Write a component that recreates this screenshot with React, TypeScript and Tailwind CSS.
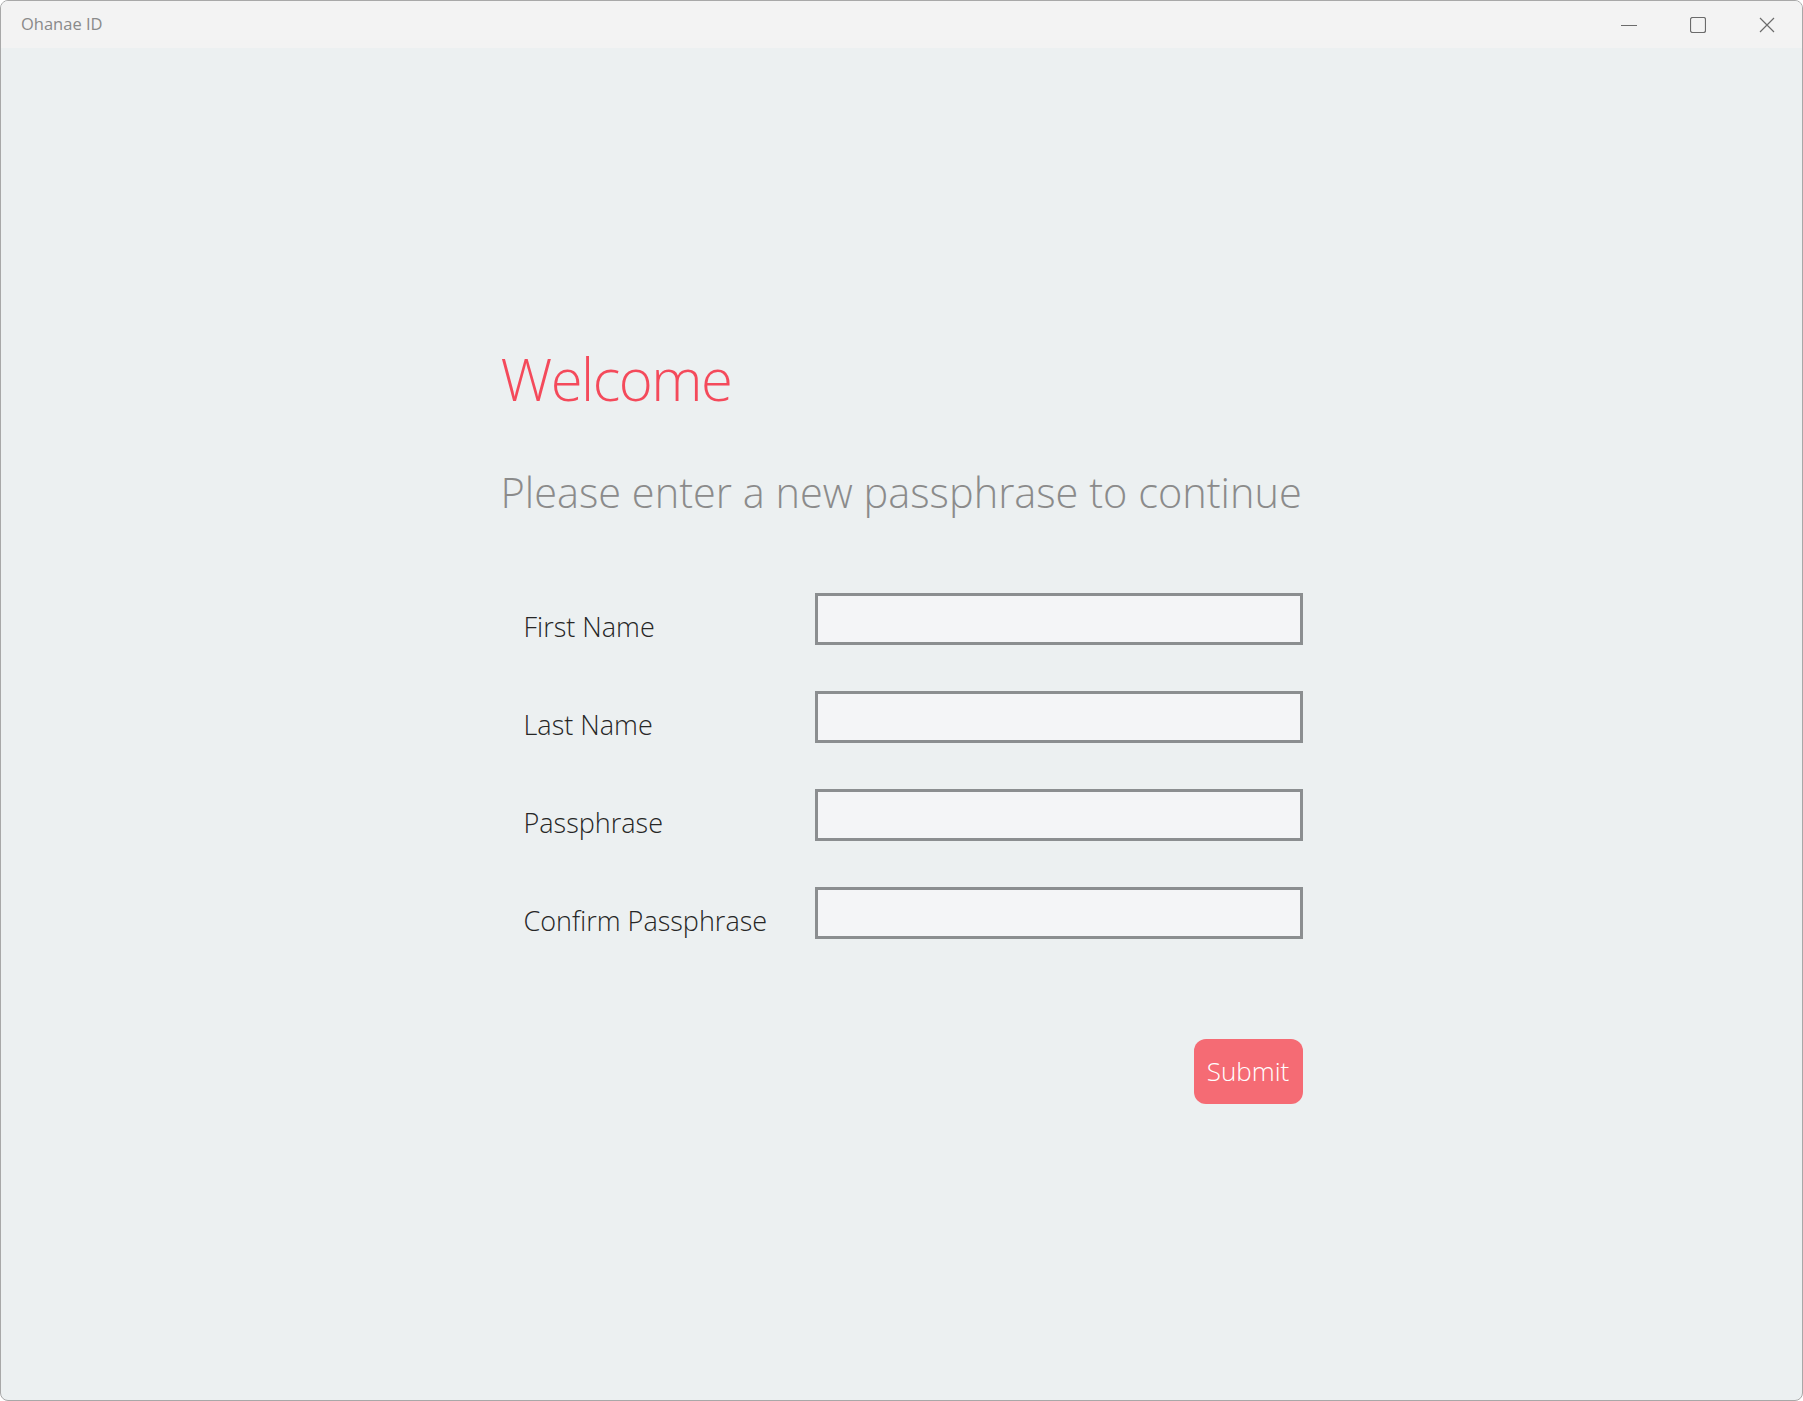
import * as React from "react";

const font = { fontFamily: '"Open Sans", "Noto Sans", sans-serif' };

const Field = ({ label }: { label: string }) => {
  return (
    <div className="flex items-start h-[52px]">
      <div className="w-[314px] pl-[23px] pt-[20px] text-[27px] leading-none font-light text-[#262626] whitespace-nowrap">
        {label}
      </div>
      <div className="w-[488px] h-[52px] border-[3px] border-[#8b8e90] bg-[#f4f5f7]"></div>
    </div>
  );
};

export default function App() {
  return (
    <div className="w-[1803px] h-[1401px] bg-white" style={font}>
      <div className="w-full h-full flex flex-col rounded-lg border border-[#a8a8a8] overflow-hidden bg-[#ecf0f1]">
        {/* title bar */}
        <div className="h-[47px] flex items-center justify-between bg-[#f3f3f3]">
          <div className="pl-[20px] text-[16.5px] text-[#8a8a8a]">Ohanae ID</div>
          <div className="flex items-center h-full mr-[1px]">
            <div className="w-[69px] h-full flex items-center justify-center">
              <svg width="16" height="16" viewBox="0 0 16 16">
                <path d="M0 8.5h16" stroke="#6b6b6b" strokeWidth="1.2" />
              </svg>
            </div>
            <div className="w-[69px] h-full flex items-center justify-center">
              <svg width="16" height="16" viewBox="0 0 16 16">
                <rect x="0.5" y="0.5" width="15" height="15" rx="2" fill="none" stroke="#6b6b6b" strokeWidth="1.2" />
              </svg>
            </div>
            <div className="w-[69px] h-full flex items-center justify-center">
              <svg width="16" height="16" viewBox="0 0 16 16">
                <path d="M1 1L15 15M15 1L1 15" stroke="#6b6b6b" strokeWidth="1.2" />
              </svg>
            </div>
          </div>
        </div>

        {/* content */}
        <div className="flex-1 flex justify-center pt-[302px]">
          <div className="w-[802px] flex flex-col">
            <h1 className="text-[58px] leading-none font-light tracking-[-1.5px] text-[#f44a5b]">Welcome</h1>
            <div className="mt-[64px] text-[41.5px] leading-none font-light text-[#8b8b8b] whitespace-nowrap">
              Please enter a new passphrase to continue
            </div>
            <div className="mt-[79px] flex flex-col gap-[46px]">
              <Field label="First Name" />
              <Field label="Last Name" />
              <Field label="Passphrase" />
              <Field label="Confirm Passphrase" />
            </div>
            <div className="mt-[100px] flex justify-end">
              <button className="w-[109px] h-[65px] rounded-[12px] bg-[#f56b74] text-white text-[26px] font-light leading-none">
                Submit
              </button>
            </div>
          </div>
        </div>
      </div>
    </div>
  );
}
